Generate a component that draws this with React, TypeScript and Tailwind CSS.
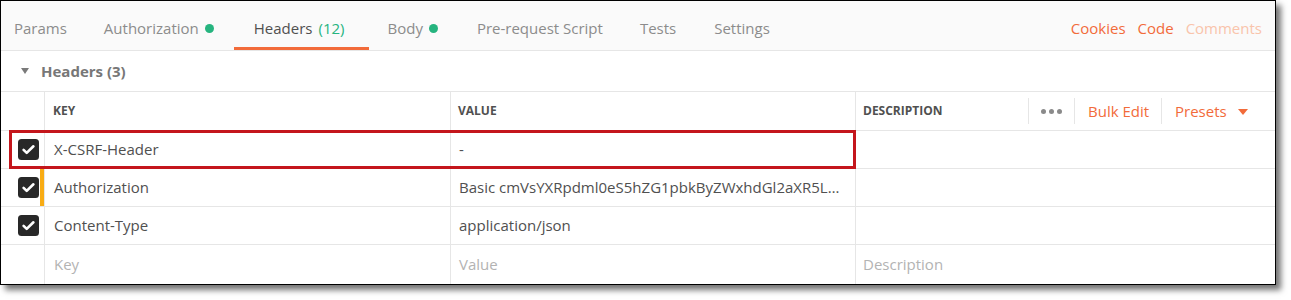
import React from 'react';

type HeaderRow = {
  key: string;
  value: string;
  edited?: boolean;
  highlighted?: boolean;
};

const rows: HeaderRow[] = [
  { key: 'X-CSRF-Header', value: '-', highlighted: true },
  { key: 'Authorization', value: 'Basic cmVsYXRpdml0eS5hZG1pbkByZWxhdGl2aXR5L…', edited: true },
  { key: 'Content-Type', value: 'application/json' },
];

// spacing between tab labels is a bit uneven in the app, keep it per tab
const tabs = [
  { label: 'Params', gap: 'ml-[13px]' },
  { label: 'Authorization', dot: true, gap: 'ml-[37px]' },
  { label: 'Headers', count: '(12)', active: true, gap: 'ml-[40px]' },
  { label: 'Body', dot: true, gap: 'ml-[43px]' },
  { label: 'Pre-request Script', gap: 'ml-[39px]' },
  { label: 'Tests', gap: 'ml-[37px]' },
  { label: 'Settings', gap: 'ml-[38px]' },
];

function Checkbox() {
  return (
    <svg width="21" height="21" viewBox="0 0 21 21" className="block">
      <rect x="0" y="0" width="21" height="21" rx="3.5" fill="#282828" />
      <path
        d="M5.6 10.9l3.1 3 6.7-6.6"
        fill="none"
        stroke="#fff"
        strokeWidth="2.6"
        strokeLinecap="round"
        strokeLinejoin="round"
      />
    </svg>
  );
}

export default function App() {
  return (
    <div className="bg-white w-[1300px] h-[300px] font-['Open_Sans',sans-serif] text-[15px]">
      <div className="w-[1276px] h-[285px] border border-black bg-white flex flex-col shadow-[5px_5px_6px_rgba(0,0,0,0.55)]">
        {/* Tab bar */}
        <div className="h-[50px] shrink-0 bg-[#fafafa] border-b border-[#e6e6e6] flex items-stretch">
          <div className="flex items-stretch">
            {tabs.map((t) => (
              <div
                key={t.label}
                className={`relative flex items-center pt-[6px] ${t.gap} ${
                  t.active ? 'text-[#505050]' : 'text-[#8c8c8c]'
                }`}
              >
                <span>{t.label}</span>
                {t.count && <span className="ml-[6px] text-[#26b47f]">{t.count}</span>}
                {t.dot && <span className="ml-[6px] w-[9px] h-[9px] rounded-full bg-[#26b47f]" />}
                {t.active && <span className="absolute left-[-20px] right-[-25px] bottom-0 h-[3px] bg-[#f26b3a]" />}
              </div>
            ))}
          </div>
          <div className="ml-auto flex items-center gap-3 pr-[13px] pt-[6px]">
            <span className="text-[#f26b3a]">Cookies</span>
            <span className="text-[#f26b3a]">Code</span>
            <span className="text-[#f9c4ab]">Comments</span>
          </div>
        </div>

        {/* Section title */}
        <div className="h-[41px] shrink-0 border-b border-[#e6e6e6] flex items-center">
          <svg width="8" height="6" viewBox="0 0 8 6" className="ml-[20px] mr-[12px]">
            <path d="M0 0h8L4 6z" fill="#7a7a7a" />
          </svg>
          <span className="font-bold text-[#777777]">Headers (3)</span>
        </div>

        {/* Column headers */}
        <div className="h-[39px] shrink-0 border-b border-[#e6e6e6] flex text-[12px] font-bold text-[#505050]">
          <div className="w-[44px] shrink-0 border-r border-[#e6e6e6]" />
          <div className="w-[406px] shrink-0 border-r border-[#e6e6e6] flex items-center pl-[8px]">KEY</div>
          <div className="w-[405px] shrink-0 border-r border-[#e6e6e6] flex items-center pl-[7px]">VALUE</div>
          <div className="flex-1 flex items-center">
            <span className="pl-[7px] flex-1">DESCRIPTION</span>
            <div className="w-px h-[26px] bg-[#e6e6e6]" />
            <div className="w-[45px] flex items-center justify-center gap-[3px]">
              <span className="w-[5px] h-[5px] rounded-full bg-[#8a8a8a]" />
              <span className="w-[5px] h-[5px] rounded-full bg-[#8a8a8a]" />
              <span className="w-[5px] h-[5px] rounded-full bg-[#8a8a8a]" />
            </div>
            <div className="w-px h-[26px] bg-[#e6e6e6]" />
            <div className="w-[86px] pl-[13px] text-[15px] font-normal text-[#f26b3a]">Bulk Edit</div>
            <div className="w-px h-[26px] bg-[#e6e6e6]" />
            <div className="w-[113px] pl-[13px] flex items-center text-[15px] font-normal text-[#f26b3a]">
              <span>Presets</span>
              <svg width="10" height="6" viewBox="0 0 10 6" className="ml-[11px] mt-[2px]">
                <path d="M0 0h10L5 6z" fill="#f26b3a" />
              </svg>
            </div>
          </div>
        </div>

        {/* Rows */}
        {rows.map((r) => (
          <div key={r.key} className="relative h-[38px] shrink-0 border-b border-[#e6e6e6] flex text-[#505050]">
            <div className="w-[44px] shrink-0 border-r border-[#e6e6e6] flex items-center">
              <span className="pl-[17px]">
                <Checkbox />
              </span>
              {r.edited && <span className="ml-auto w-[4px] self-stretch bg-[#f8ac14]" />}
            </div>
            <div className="w-[406px] shrink-0 border-r border-[#e6e6e6] flex items-center pl-[9px]">{r.key}</div>
            <div className="w-[405px] shrink-0 border-r border-[#e6e6e6] flex items-center pl-[8px] pr-[10px] whitespace-nowrap overflow-hidden">
              {r.value}
            </div>
            <div className="flex-1" />
            {r.highlighted && (
              <div className="absolute left-[8px] top-[-1px] w-[847px] h-[39px] border-[3px] border-[#c4161c] pointer-events-none" />
            )}
          </div>
        ))}

        {/* Empty row */}
        <div className="flex-1 flex text-[#b3b3b3]">
          <div className="w-[44px] shrink-0 border-r border-[#e6e6e6]" />
          <div className="w-[406px] shrink-0 border-r border-[#e6e6e6] flex items-center pl-[9px]">Key</div>
          <div className="w-[405px] shrink-0 border-r border-[#e6e6e6] flex items-center pl-[8px]">Value</div>
          <div className="flex-1 flex items-center pl-[7px]">Description</div>
        </div>
      </div>
    </div>
  );
}
